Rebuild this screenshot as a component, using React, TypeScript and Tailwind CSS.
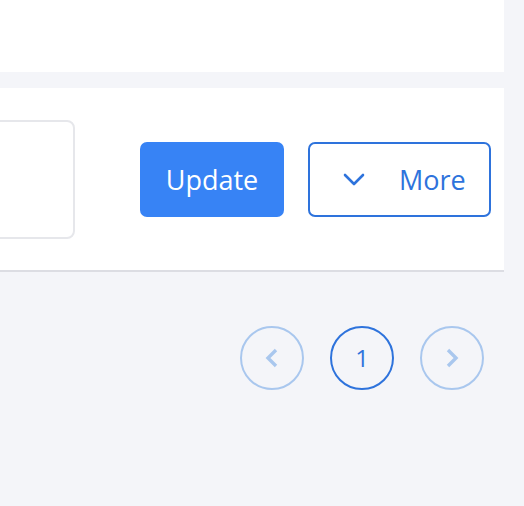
import React from 'react';

const font = { fontFamily: '"Open Sans", "Liberation Sans", sans-serif' };

export default function App() {
  return (
    <div className="w-[524px] h-[506px] bg-[#f4f5f9] overflow-hidden" style={font}>
      {/* top panel */}
      <div className="w-[504px] h-[72px] bg-white" />

      {/* form panel */}
      <div className="mt-4 w-[504px] h-[184px] bg-white border-b-2 border-[#dcdde3] flex items-start overflow-hidden">
        <div className="-ml-5 mt-8 w-[95px] h-[119px] shrink-0 rounded-lg border-2 border-[#e6e7eb] bg-white" />
        <button className="ml-[65px] mt-[54px] w-[144px] h-[75px] shrink-0 rounded-[7px] bg-[#3783f5] text-white text-[27px] font-medium leading-none">
          Update
        </button>
        <button className="ml-6 mt-[54px] w-[183px] h-[75px] shrink-0 rounded-[7px] border-2 border-[#2e73dc] bg-white text-[#2e73dc] text-[27px] font-medium leading-none flex items-center pl-[33px]">
          <svg width="22" height="13" viewBox="0 0 22 13" fill="none" stroke="currentColor" strokeWidth="2.6" strokeLinecap="round" strokeLinejoin="round">
            <polyline points="2,2 11,11 20,2" />
          </svg>
          <span className="ml-[34px]">More</span>
        </button>
      </div>

      {/* pagination */}
      <div className="flex justify-end gap-[26px] pr-10 pt-[54px]">
        <button className="w-16 h-16 rounded-full border-2 border-[#a9c7ee] flex items-center justify-center text-[#a9c7ee]">
          <svg width="14" height="20" viewBox="0 0 14 20" fill="none" stroke="currentColor" strokeWidth="3.4" strokeLinejoin="miter">
            <polyline points="11,2 3,10 11,18" />
          </svg>
        </button>
        <button className="w-16 h-16 rounded-full border-2 border-[#2e73dc] flex items-center justify-center text-[#2e73dc] text-[24px] font-medium leading-none">
          1
        </button>
        <button className="w-16 h-16 rounded-full border-2 border-[#a9c7ee] flex items-center justify-center text-[#a9c7ee]">
          <svg width="14" height="20" viewBox="0 0 14 20" fill="none" stroke="currentColor" strokeWidth="3.4" strokeLinejoin="miter">
            <polyline points="3,2 11,10 3,18" />
          </svg>
        </button>
      </div>
    </div>
  );
}
